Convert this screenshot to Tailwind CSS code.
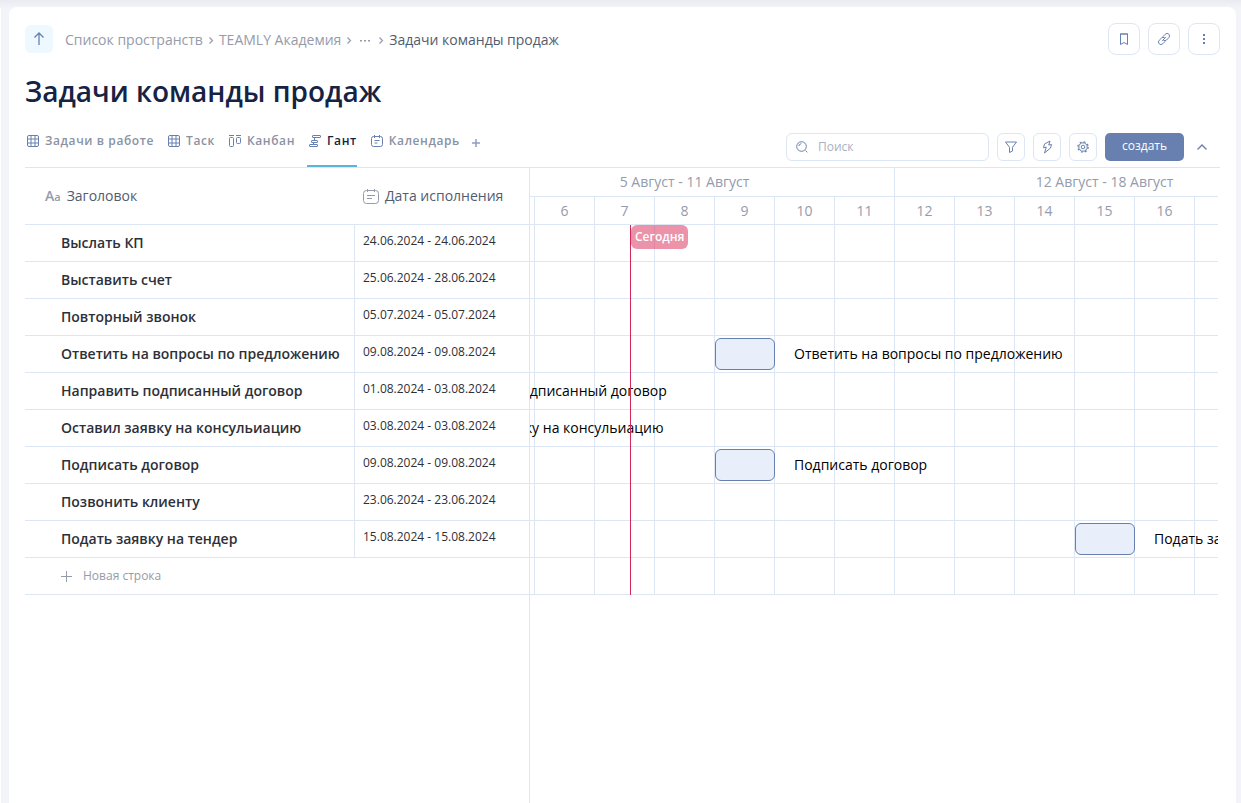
<!DOCTYPE html>
<html lang="ru">
<head>
<meta charset="utf-8">
<meta name="viewport" content="width=device-width, initial-scale=1">
<title>Задачи команды продаж</title>
<script src="https://cdn.jsdelivr.net/npm/@tailwindcss/browser@4"></script>
</head>
<body class="flex min-h-screen bg-[#f3f4f9] bg-linear-to-b from-[#eaebf0] to-[#f3f4f9] to-[8px] font-['Open_Sans',sans-serif] text-sm text-[#2d3038]">
<div class="mt-2 w-px shrink-0 bg-white"></div>
<main class="mt-[7px] mr-[5px] ml-2 flex min-w-0 flex-1 flex-col rounded-t-lg bg-white px-4 pt-4">

  <header class="flex items-center justify-between">
    <nav aria-label="Путь" class="flex items-center text-sm text-[#959bab]">
      <button type="button" aria-label="Наверх" class="mr-3 flex size-7 items-center justify-center rounded-md bg-[#eef8ff] text-[#6780af]">
        <svg class="size-4" viewBox="0 0 16 16" fill="none" stroke="currentColor" stroke-width="1.3"><path d="M8 14V2.5M3.5 6.5 8 2l4.500 4.500"/></svg>
      </button>
      <div class="flex items-center pt-0.5">
        <a href="#">Список пространств</a>
        <svg class="h-4 w-4" viewBox="0 0 16 16" fill="none" stroke="currentColor" stroke-width="1.2"><path d="M6.500 5.500 9.500 8.500 6.500 11.500"/></svg>
        <a href="#">TEAMLY Академия</a>
        <svg class="h-4 w-4" viewBox="0 0 16 16" fill="none" stroke="currentColor" stroke-width="1.2"><path d="M6.500 5.500 9.500 8.500 6.500 11.500"/></svg>
        <button type="button" aria-label="Показать скрытые" class="flex h-4 w-4 items-center justify-center">
          <svg class="size-3" viewBox="0 0 12 12" fill="currentColor"><path d="M1 6h2v1.500H1zM5 6h2v1.500H5zM9 6h2v1.500H9z"/></svg>
        </button>
        <svg class="h-4 w-4" viewBox="0 0 16 16" fill="none" stroke="currentColor" stroke-width="1.2"><path d="M6.500 5.500 9.500 8.500 6.500 11.500"/></svg>
        <span class="text-[#525c70]">Задачи команды продаж</span>
      </div>
    </nav>
    <div class="flex gap-2 text-[#6780af]">
      <button type="button" aria-label="В закладки" class="flex size-8 items-center justify-center rounded-lg border border-[#dde6f4]">
        <svg class="size-4" viewBox="0 0 16 16" fill="none" stroke="currentColor"><path d="M4.500 3v10.500L8 11.500l3.500 2V3z"/><path d="M4 3h8"/></svg>
      </button>
      <button type="button" aria-label="Скопировать ссылку" class="flex size-8 items-center justify-center rounded-lg border border-[#dde6f4]">
        <svg class="size-4" viewBox="0 0 16 16" fill="none" stroke="currentColor" stroke-linecap="round"><path d="M6.500 9.500 9.500 6.500"/><path d="M7 5.500 9.300 3.200a2.400 2.400 0 0 1 3.500 3.500L10.500 9a2.400 2.400 0 0 1-3 .3"/><path d="M9 10.500 6.700 12.800a2.400 2.400 0 0 1-3.500-3.500L5.500 7a2.400 2.400 0 0 1 3-.3"/></svg>
      </button>
      <button type="button" aria-label="Ещё" class="flex size-8 items-center justify-center rounded-lg border border-[#dde6f4]">
        <svg class="size-4" viewBox="0 0 16 16" fill="currentColor"><path d="M7 3h2v2H7zM7 7h2v2H7zM7 11h2v2H7z"/></svg>
      </button>
    </div>
  </header>

  <h1 class="mt-4 text-[28px] leading-10 font-semibold text-[#152344]">Задачи команды продаж</h1>

  <div class="mt-[22px] flex h-[35px] items-start justify-between border-b border-[#dde6f4]">
    <div role="tablist" class="flex h-9 text-xs font-semibold tracking-wider text-[#8b92a3]">
      <button type="button" role="tab" class="mr-3 flex h-4 items-center gap-1">
        <svg class="size-4 text-[#6780af]" viewBox="0 0 16 16" fill="none" stroke="currentColor"><rect x="2.500" y="2.500" width="11" height="11" rx="1.500"/><path d="M6 2.500v11M10 2.500v11M2.500 6h11M2.500 10h11"/></svg>
        Задачи в работе</button>
      <button type="button" role="tab" class="mr-3 flex h-4 items-center gap-1">
        <svg class="size-4 text-[#6780af]" viewBox="0 0 16 16" fill="none" stroke="currentColor"><rect x="2.500" y="2.500" width="11" height="11" rx="1.500"/><path d="M6 2.500v11M10 2.500v11M2.500 6h11M2.500 10h11"/></svg>
        Таск</button>
      <button type="button" role="tab" class="mr-3 flex h-4 items-center gap-1">
        <svg class="size-4 text-[#6780af]" viewBox="0 0 16 16" fill="none" stroke="currentColor"><path d="M2 2.500h5M9 2.500h5"/><rect x="2.500" y="4.500" width="4" height="9" rx="1"/><rect x="9.500" y="4.500" width="4" height="6" rx="1"/></svg>
        Канбан</button>
      <button type="button" role="tab" aria-selected="true" class="mr-3 flex h-[34px] items-start border-b-2 border-[#5cb3dc] text-[#152344]">
        <span class="flex h-4 items-center gap-1">
        <svg class="size-4 text-[#6780af]" viewBox="0 0 16 16" fill="none" stroke="currentColor"><rect x="5.500" y="2.500" width="8" height="2" rx=".5"/><rect x="4.500" y="7.500" width="6" height="2" rx=".5"/><rect x="2.500" y="11.500" width="8" height="2" rx=".5"/><path d="M7.500 4.500v3M6.500 9.500v2"/></svg>
        Гант</span></button>
      <button type="button" role="tab" class="mr-2 flex h-4 items-center gap-1">
        <svg class="size-4 text-[#6780af]" viewBox="0 0 16 16" fill="none" stroke="currentColor"><rect x="2.500" y="3.500" width="11" height="10" rx="2"/><path d="M5.500 2v3M10.500 2v3M5.500 7.500h5M5.500 10h3"/></svg>
        Календарь</button>
      <button type="button" aria-label="Добавить представление" class="flex h-5 items-center text-[#8f9fc2]">
        <svg class="size-4" viewBox="0 0 16 16" fill="none" stroke="currentColor" stroke-width="1.500"><path d="M8 4v8M4 8h8"/></svg>
      </button>
    </div>
    <div class="flex items-center gap-2 text-[#6780af]">
      <label class="flex h-7 w-[203px] items-center gap-2 rounded-md border border-[#dde6f4] px-[7px]">
        <svg class="size-4 shrink-0" viewBox="0 0 16 16" fill="none" stroke="currentColor"><circle cx="7.500" cy="7.500" r="4.800"/><path d="M4.800 7a2.700 2.700 0 0 1 2.500-2.300M11.500 11.500l1.800 1.800"/></svg>
        <input type="search" aria-label="Поиск" placeholder="Поиск" class="w-full min-w-0 bg-transparent text-xs outline-none placeholder:text-[#aab1bf]">
      </label>
      <button type="button" aria-label="Фильтр" class="flex size-7 items-center justify-center rounded-md border border-[#dde6f4]">
        <svg class="size-4" viewBox="0 0 16 16" fill="none" stroke="currentColor" stroke-linejoin="round"><path d="M2.500 3h11L9.500 8.300v3.700l-3 1.500V8.300z"/></svg>
      </button>
      <button type="button" aria-label="Автоматизация" class="flex size-7 items-center justify-center rounded-md border border-[#dde6f4]">
        <svg class="size-4" viewBox="0 0 16 16" fill="none" stroke="currentColor" stroke-linejoin="round"><path d="M11 2 5.500 5 4.500 8.800l2.800-.6L5.500 14 11.500 9l1-3.500-2.800.5z"/></svg>
      </button>
      <button type="button" aria-label="Настройки" class="flex size-7 items-center justify-center rounded-md border border-[#dde6f4]">
        <svg class="size-4" viewBox="0 0 16 16" fill="none" stroke="currentColor" stroke-linejoin="round"><circle cx="8" cy="8" r="1.800"/><circle cx="8" cy="8" r="4.200"/><circle cx="8" cy="8" r="5.200" stroke-width="1.200" stroke-dasharray="2.040 2.040"/></svg>
      </button>
      <button type="button" class="h-7 w-[79px] rounded-[5px] bg-[#6780af] pb-0.5 text-xs font-medium text-white">создать</button>
      <button type="button" aria-label="Свернуть" class="mr-2.5 ml-0.5 flex h-7 w-4 items-center justify-center">
        <svg class="size-4" viewBox="0 0 16 16" fill="none" stroke="currentColor" stroke-width="1.400"><path d="M3.500 10.500 8 6l4.500 4.500"/></svg>
      </button>
    </div>
  </div>

  <div class="flex flex-1">
    <section aria-label="Список задач" class="w-[505px] shrink-0 border-r border-[#dde6f4]">
      <table class="w-full table-fixed border-separate border-spacing-0 text-left">
        <colgroup><col class="w-[330px]"><col></colgroup>
        <thead>
          <tr class="h-[57px] text-[#525c70]">
            <th class="border-b border-[#dde6f4] pl-5 font-normal"><span class="flex items-center gap-1.5"><span aria-hidden="true" class="text-sm leading-5 font-semibold text-[#959bab]">A<span class="text-[11px]">a</span></span>Заголовок</span></th>
            <th class="border-b border-[#dde6f4] pl-2 font-normal"><span class="flex items-center gap-1.5"><svg class="size-4 text-[#959bab]" viewBox="0 0 16 16" fill="none" stroke="currentColor"><rect x=".5" y="2.500" width="15" height="13" rx="3"/><path d="M4.500 1v3M11.500 1v3M4 7.500h8M4 10.500h5"/></svg>Дата исполнения</span></th>
          </tr>
        </thead>
        <tbody id="task-rows"></tbody>
      </table>
      <button type="button" class="flex h-[37px] w-full items-center gap-2.5 border-b border-[#dde6f4] pl-[34px] text-xs text-[#959bab]">
        <svg class="size-3.5" viewBox="0 0 14 14" fill="none" stroke="currentColor"><path d="M7.500 2v11M2 7.500h11"/></svg>
        Новая строка
      </button>
    </section>

    <section aria-label="Диаграмма Ганта" class="mr-0.5 min-w-0 flex-1 overflow-hidden">
      <div class="-ml-[55px] w-[840px] text-[#959bab]">
        <div class="grid h-[29px] grid-cols-2 border-b border-[#dde6f4] text-center leading-7">
          <div class="border-r border-[#dde6f4]">5 Август - 11 Август</div>
          <div class="border-r border-[#dde6f4]">12 Август - 18 Август</div>
        </div>
        <div id="days" class="grid h-7 grid-cols-14 border-b border-[#dde6f4] text-center leading-7"></div>
        <div class="relative bg-[repeating-linear-gradient(to_right,transparent_0_59px,#dde6f4_59px_60px)] text-black">
          <div id="bars"></div>
          <div class="absolute inset-y-0 left-[155px] border-l border-[#d3285a]">
            <span class="block h-6 rounded-md bg-[#e04a70]/60 px-1 text-xs leading-6 font-semibold text-white">Сегодня</span>
          </div>
        </div>
      </div>
    </section>
  </div>
</main>

<script>
  // start/end are day offsets from 5 August, the first day of the drawn range
  const tasks = [
    { name: 'Выслать КП', dates: '24.06.2024 - 24.06.2024' },
    { name: 'Выставить счет', dates: '25.06.2024 - 28.06.2024' },
    { name: 'Повторный звонок', dates: '05.07.2024 - 05.07.2024' },
    { name: 'Ответить на вопросы по предложению', dates: '09.08.2024 - 09.08.2024', start: 4, end: 5 },
    { name: 'Направить подписанный договор', dates: '01.08.2024 - 03.08.2024', start: -4, end: -1 },
    { name: 'Оставил заявку на консульиацию', dates: '03.08.2024 - 03.08.2024', start: -2, end: -1 },
    { name: 'Подписать договор', dates: '09.08.2024 - 09.08.2024', start: 4, end: 5 },
    { name: 'Позвонить клиенту', dates: '23.06.2024 - 23.06.2024' },
    { name: 'Подать заявку на тендер', dates: '15.08.2024 - 15.08.2024', start: 10, end: 11 },
  ];
  const DAY = 60;

  document.getElementById('task-rows').innerHTML = tasks.map(t => `
    <tr class="h-[37px]">
      <td class="border-r border-b border-[#dde6f4] pl-9 font-semibold whitespace-nowrap">${t.name}</td>
      <td class="border-b border-[#dde6f4] pb-1 pl-2 text-xs whitespace-nowrap">${t.dates}</td>
    </tr>`).join('');

  document.getElementById('days').innerHTML = Array.from({ length: 14 }, (_, i) =>
    `<div class="border-r border-[#dde6f4]">${i + 5}</div>`).join('');

  document.getElementById('bars').innerHTML = [...tasks, {}].map(t => `
    <div class="flex h-[37px] items-center border-b border-[#dde6f4]">${t.start !== undefined ? `
      <div class="h-8 shrink-0 rounded-md border border-[#6780af] bg-[#e8effa]" style="margin-left:${t.start * DAY}px;width:${(t.end - t.start) * DAY}px"></div>
      <span class="ml-[19px] whitespace-nowrap">${t.name}</span>` : ''}
    </div>`).join('');
</script>
</body>
</html>
